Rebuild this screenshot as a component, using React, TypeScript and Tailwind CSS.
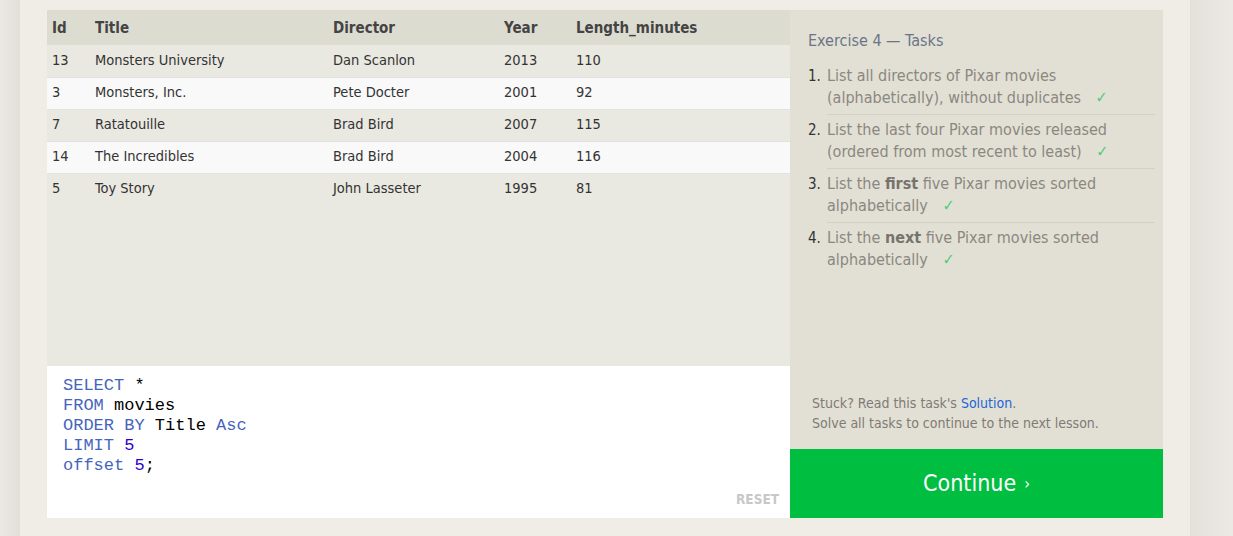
import React from "react";

const rows = [
  { id: 13, title: "Monsters University", director: "Dan Scanlon", year: 2013, len: 110 },
  { id: 3, title: "Monsters, Inc.", director: "Pete Docter", year: 2001, len: 92 },
  { id: 7, title: "Ratatouille", director: "Brad Bird", year: 2007, len: 115 },
  { id: 14, title: "The Incredibles", director: "Brad Bird", year: 2004, len: 116 },
  { id: 5, title: "Toy Story", director: "John Lasseter", year: 1995, len: 81 },
];

const Check = () => <span className="ml-[10px] text-[#52cc7f]">✓</span>;

const tasks: React.ReactNode[] = [
  <>List all directors of Pixar movies (alphabetically), without duplicates <Check /></>,
  <>List the last four Pixar movies released (ordered from most recent to least) <Check /></>,
  <>List the <b className="text-[#76726c]">first</b> five Pixar movies sorted alphabetically <Check /></>,
  <>List the <b className="text-[#76726c]">next</b> five Pixar movies sorted alphabetically <Check /></>,
];

const Kw = ({ children }: { children: React.ReactNode }) => <span className="text-[#4565bd]">{children}</span>;
const Num = ({ children }: { children: React.ReactNode }) => <span className="text-[#2a00cc]">{children}</span>;

const App: React.FC = () => {
  return (
    <div
      className="flex h-[536px] w-full overflow-hidden bg-[#ece8e4] text-[#333]"
      style={{ fontFamily: '"DejaVu Sans Condensed", "DejaVu Sans", Lato, sans-serif' }}
    >
      <div className="w-[20px] bg-gradient-to-r from-[#ece8e4] to-[#e2deda]" />
      <div className="w-[1170px] bg-[#efede6] pl-[27px] pr-[27px] pt-[10px]">
        <div className="flex h-[508px]">
          {/* results + editor */}
          <div className="flex w-[743px] flex-col">
            <div className="flex-1 bg-[#eae9e1]">
              <table className="w-full border-collapse text-left">
                <thead>
                  <tr className="h-[35px] bg-[#dddcd0] text-[15px] font-bold text-[#444]">
                    <th className="w-[48px] pl-[5px] pt-[2px]">Id</th>
                    <th className="w-[238px] pt-[2px]">Title</th>
                    <th className="w-[171px] pt-[2px]">Director</th>
                    <th className="w-[72px] pt-[2px]">Year</th>
                    <th className="pt-[2px]">Length_minutes</th>
                  </tr>
                </thead>
                <tbody className="text-[14.5px]">
                  {rows.map((r, i) => (
                    <tr
                      key={r.id}
                      className={
                        i % 2 === 1
                          ? "h-[32px] border-y border-[#e2e2e0] bg-[#f9f9f9]"
                          : "h-[32px]"
                      }
                    >
                      <td className="pl-[5px]">{r.id}</td>
                      <td>{r.title}</td>
                      <td>{r.director}</td>
                      <td>{r.year}</td>
                      <td>{r.len}</td>
                    </tr>
                  ))}
                </tbody>
              </table>
            </div>
            <div className="relative h-[152px] bg-white pl-[16px] pt-[10px]">
              <pre
                className="text-[17px] leading-[20px] text-black"
                style={{ fontFamily: '"Liberation Mono", "Courier New", monospace' }}
              >
                <Kw>SELECT</Kw> *{"\n"}
                <Kw>FROM</Kw> movies{"\n"}
                <Kw>ORDER BY</Kw> Title <Kw>Asc</Kw>{"\n"}
                <Kw>LIMIT</Kw> <Num>5</Num>{"\n"}
                <Kw>offset</Kw> <Num>5</Num>;
              </pre>
              <span className="absolute bottom-[9px] right-[11px] text-[13.5px] font-bold text-[#c8c8c8]">
                RESET
              </span>
            </div>
          </div>

          {/* tasks panel */}
          <div className="flex w-[373px] flex-col bg-[#e2e0d4]">
            <div className="flex-1 pl-[18px] pr-[8px] pt-[21px]">
              <h2 className="mb-[10px] text-[16px] leading-[20px] text-[#6b7487]">
                Exercise 4 — Tasks
              </h2>
              <ol className="text-[16px] leading-[22px] text-[#8b8781]">
                {tasks.map((t, i) => (
                  <li key={i} className="flex">
                    <span className="w-[19px] shrink-0 pt-[4px] text-[15px] text-[#333]">{i + 1}.</span>
                    <div
                      className={
                        i < tasks.length - 1
                          ? "flex-1 border-b border-[#d3d1c5] pb-[5px] pt-[4px]"
                          : "flex-1 pb-[5px] pt-[4px]"
                      }
                    >
                      {t}
                    </div>
                  </li>
                ))}
              </ol>
            </div>
            <div className="pb-[16px] pl-[22px] text-[14px] leading-[20px] text-[#7f7a74]">
              <p>
                Stuck? Read this task's <span className="text-[#1c66d9]">Solution</span>.
              </p>
              <p>Solve all tasks to continue to the next lesson.</p>
            </div>
            <button className="flex h-[69px] items-center justify-center bg-[#00be40] text-[23px] font-medium text-white">
              Continue <span className="ml-[8px] text-[16px]">›</span>
            </button>
          </div>
        </div>
      </div>
      <div className="flex-1 bg-gradient-to-r from-[#e4e0dc] to-[#ece8e4]" />
    </div>
  );
};

export default App;
